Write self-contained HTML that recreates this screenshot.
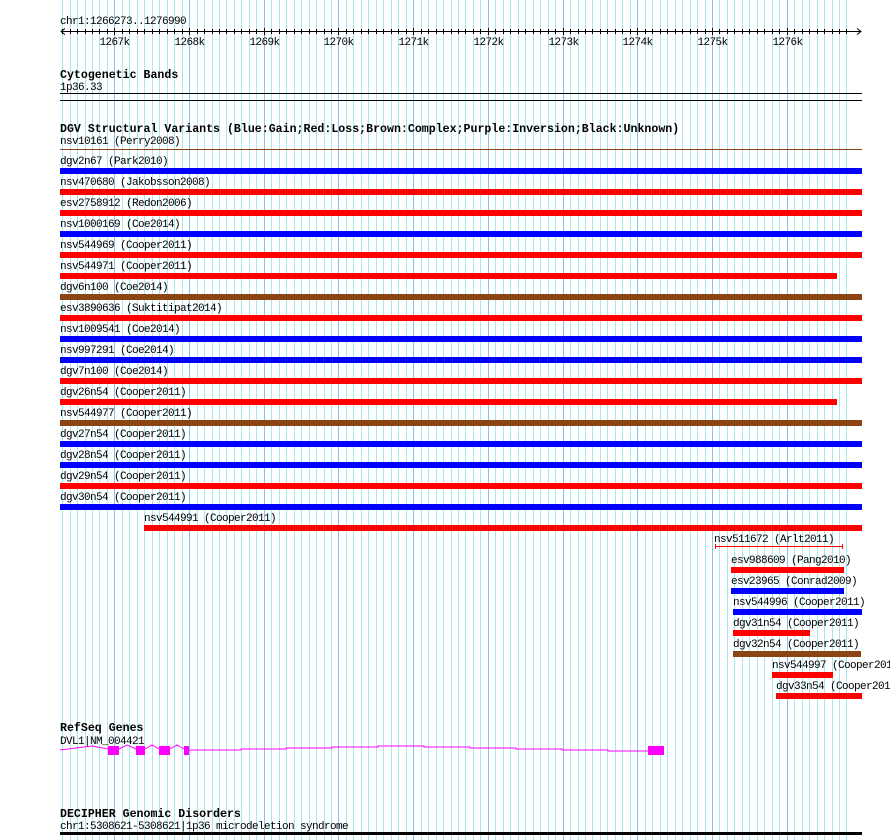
<!DOCTYPE html>
<html><head><meta charset="utf-8"><style>
html,body{margin:0;padding:0;background:#fff;width:890px;height:840px;overflow:hidden}
svg text{font-family:"Liberation Mono",monospace;font-size:11px;letter-spacing:-0.6px;fill:#000}
svg text.h{font-weight:bold;font-size:11.6px;letter-spacing:0}
</style></head><body>
<svg id="s" width="890" height="840" xmlns="http://www.w3.org/2000/svg">
<g id="grid"></g>
<g id="fg"></g>
</svg>
<script>
var NS="http://www.w3.org/2000/svg";
var g=document.getElementById("grid"),f=document.getElementById("fg");
function el(p,tag,a,txt){var e=document.createElementNS(NS,tag);for(var k in a)e.setAttribute(k,a[k]);if(txt)e.textContent=txt;p.appendChild(e);return e;}
for(var k=0;k<=105;k++){var x=Math.round(62.1+7.47*k)+0.5;var maj=(k%10==7);
el(g,"line",{x1:x,y1:0,x2:x,y2:840,stroke:maj?"#84c4ea":"#a6e8f0","stroke-width":1});}
el(f,"text",{x:60,y:24},"chr1:1266273..1276990");
el(f,"line",{x1:61,y1:31.5,x2:861,y2:31.5,stroke:"#000"});
el(f,"path",{d:"M65 28.5 L61 31.5 L65 34.5 M857 28.5 L861 31.5 L857 34.5",stroke:"#000",fill:"none"});
for(var k=0;k<=105;k++){var x=Math.round(62.1+7.47*k)+0.5;var maj=(k%10==7);
el(f,"line",{x1:x,y1:maj?28:29,x2:x,y2:maj?35:34,stroke:"#000"});
if(maj){el(f,"text",{x:x,y:45,"text-anchor":"middle"},(1267+(k-7)/10)+"k");}}
el(f,"text",{x:60,y:78,"class":"h"},"Cytogenetic Bands");
el(f,"text",{x:60,y:90},"1p36.33");
el(f,"rect",{x:60,y:93,width:802,height:1,fill:"#000"});
el(f,"rect",{x:60,y:100,width:802,height:1,fill:"#000"});
el(f,"text",{x:60,y:132,"class":"h"},"DGV Structural Variants (Blue:Gain;Red:Loss;Brown:Complex;Purple:Inversion;Black:Unknown)");
el(f,"text",{x:60,y:144},"nsv10161 (Perry2008)");
el(f,"rect",{x:60,y:149,width:802,height:1,fill:"#8b4513"});
var B="#0000ff",R="#ff0000",N="#8b4513";
var rows=[["dgv2n67 (Park2010)",B,60,862],["nsv470680 (Jakobsson2008)",R,60,862],["esv2758912 (Redon2006)",R,60,862],["nsv1000169 (Coe2014)",B,60,862],["nsv544969 (Cooper2011)",R,60,862],["nsv544971 (Cooper2011)",R,60,837],["dgv6n100 (Coe2014)",N,60,862],["esv3890636 (Suktitipat2014)",R,60,862],["nsv1009541 (Coe2014)",B,60,862],["nsv997291 (Coe2014)",B,60,862],["dgv7n100 (Coe2014)",R,60,862],["dgv26n54 (Cooper2011)",R,60,837],["nsv544977 (Cooper2011)",N,60,862],["dgv27n54 (Cooper2011)",B,60,862],["dgv28n54 (Cooper2011)",B,60,862],["dgv29n54 (Cooper2011)",R,60,862],["dgv30n54 (Cooper2011)",B,60,862],["nsv544991 (Cooper2011)",R,144,862],
["nsv511672 (Arlt2011)","T",715,843],["esv988609 (Pang2010)",R,731,844],["esv23965 (Conrad2009)",B,731,844],["nsv544996 (Cooper2011)",B,733,862],["dgv31n54 (Cooper2011)",R,733,810],["dgv32n54 (Cooper2011)",N,733,861],["nsv544997 (Cooper2011)",R,772,833],["dgv33n54 (Cooper2011)",R,776,862]];
for(var i=0;i<rows.length;i++){var r=rows[i];var T=155+21*i;
var tx=r[2];if(r[1]=="T")tx=714;
el(f,"text",{x:tx,y:T+9},r[0]);
if(r[1]=="T"){el(f,"rect",{x:715,y:T+13,width:128,height:1,fill:R});el(f,"rect",{x:715,y:T+11,width:1,height:5,fill:R});el(f,"rect",{x:842,y:T+11,width:1,height:5,fill:R});}
else el(f,"rect",{x:r[2],y:T+13,width:r[3]-r[2],height:6,fill:r[1]});}
el(f,"text",{x:60,y:731,"class":"h"},"RefSeq Genes");
el(f,"text",{x:60,y:744},"DVL1|NM_004421");
var M="#ff00ff";
el(f,"path",{d:"M60 750 L76 748 L92 746 L108 749 M119 749 L127 745 L136 749 M145 749 L152 745 L159 749 M170 749 L177 745 L184 749 M189 750 L241 750 L241 749 L286 749 L286 748 L332 748 L332 747 L378 747 L378 746 L424 746 L424 747 L470 747 L470 748 L516 748 L516 749 L562 749 L562 750 L608 750 L608 751 L648 751",stroke:M,fill:"none","stroke-width":1});
[[108,119],[136,145],[159,170],[184,189],[648,664]].forEach(function(e){el(f,"rect",{x:e[0],y:746,width:e[1]-e[0],height:9,fill:M});});
el(f,"text",{x:60,y:817,"class":"h"},"DECIPHER Genomic Disorders");
el(f,"text",{x:60,y:829},"chr1:5308621-5308621|1p36 microdeletion syndrome");
el(f,"rect",{x:60,y:832,width:802,height:3,fill:"#000"});
</script>
</body></html>
